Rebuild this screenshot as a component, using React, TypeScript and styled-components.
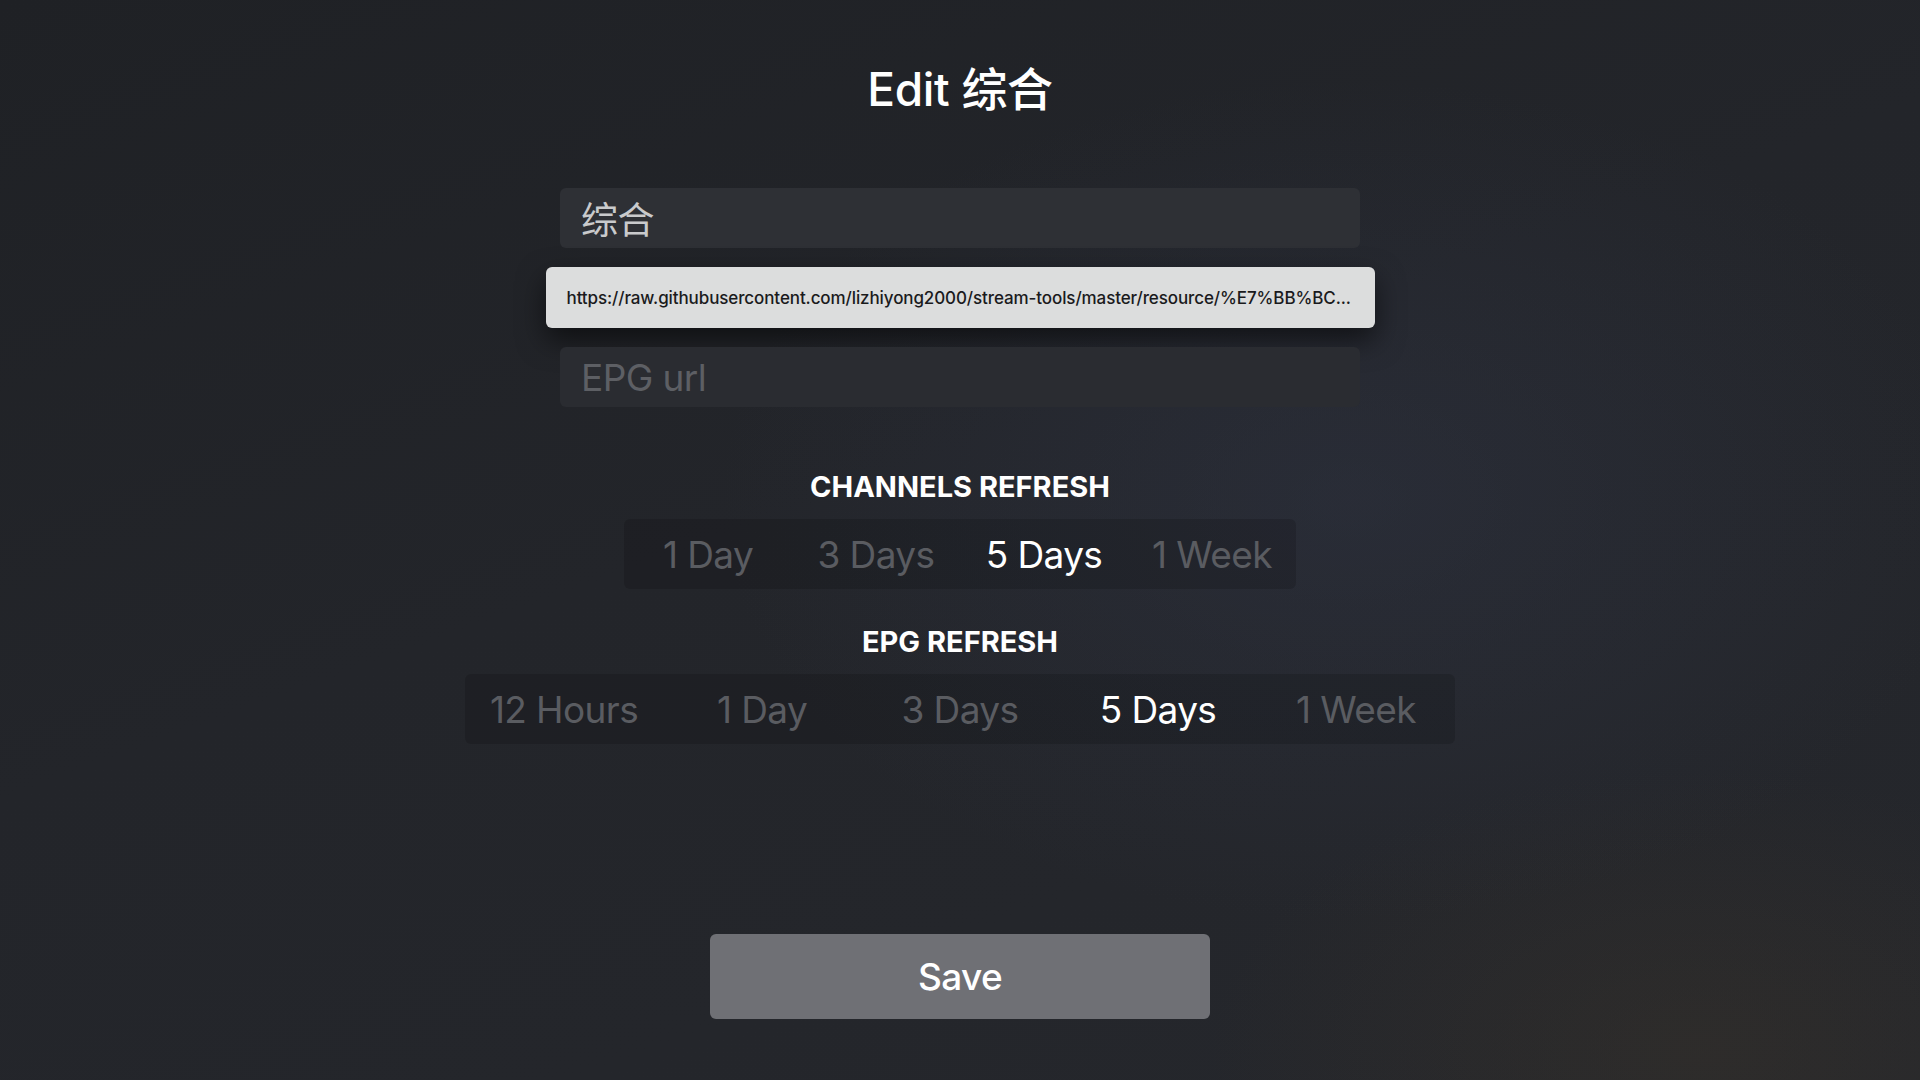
import React from "react";
import styled, { createGlobalStyle } from "styled-components";

const GlobalStyle = createGlobalStyle`
  html, body {
    margin: 0;
    padding: 0;
    width: 100%;
    height: 100%;
  }
  body {
    font-family: "Inter", "Noto Sans CJK SC", sans-serif;
    background: #222428;
    -webkit-font-smoothing: antialiased;
  }
`;

const Screen = styled.div`
  width: 1920px;
  height: 1080px;
  box-sizing: border-box;
  display: flex;
  flex-direction: column;
  align-items: center;
  padding-top: 60px;
  background:
    radial-gradient(ellipse 900px 600px at 1350px 500px, rgba(52, 58, 78, 0.35), rgba(0,0,0,0) 70%),
    radial-gradient(ellipse 700px 400px at 1700px 1050px, rgba(70, 58, 40, 0.28), rgba(0,0,0,0) 70%),
    linear-gradient(160deg, #1f2125 0%, #23252a 45%, #25272c 100%);
  overflow: hidden;
`;

const Title = styled.h1`
  margin: 0;
  font-family: "Inter", "Noto Sans CJK SC", sans-serif;
  font-size: 46px;
  line-height: 58px;
  font-weight: 500;
  color: #ffffff;
  letter-spacing: -0.3px;
`;

const Form = styled.div`
  margin-top: 70px;
  display: flex;
  flex-direction: column;
  align-items: center;
  gap: 19px;
`;

const TextField = styled.div<{ $placeholder?: boolean }>`
  width: 800px;
  height: 60px;
  box-sizing: border-box;
  padding: 0 21px;
  display: flex;
  align-items: center;
  border-radius: 6px;
  background: ${(p) => (p.$placeholder ? "#2a2c31" : "#2e3035")};
  color: ${(p) => (p.$placeholder ? "#5d5f64" : "#c9cacc")};
  font-family: "Inter", "Noto Sans CJK SC", sans-serif;
  font-size: 37px;
  letter-spacing: -0.6px;
`;

const FocusedField = styled.div`
  width: 829px;
  height: 61px;
  box-sizing: border-box;
  padding: 0 21px;
  display: flex;
  align-items: center;
  border-radius: 6px;
  background: #dcdddd;
  color: #1a1a1c;
  font-family: "Inter", sans-serif;
  font-size: 17px;
  font-weight: 500;
  letter-spacing: -0.1px;
  white-space: nowrap;
  overflow: hidden;
  box-shadow: 0 12px 28px rgba(0, 0, 0, 0.55);
`;

const Section = styled.div<{ $top: number }>`
  margin-top: ${(p) => p.$top}px;
  display: flex;
  flex-direction: column;
  align-items: center;
`;

const SectionLabel = styled.div`
  font-family: "Inter", sans-serif;
  font-size: 29px;
  line-height: 34px;
  font-weight: 700;
  color: #ffffff;
  letter-spacing: 0;
`;

const Segmented = styled.div<{ $count: number; $cell: number }>`
  margin-top: 15px;
  display: grid;
  grid-template-columns: repeat(${(p) => p.$count}, ${(p) => p.$cell}px);
  height: 70px;
  border-radius: 6px;
  background: rgba(0, 0, 0, 0.14);
`;

const Segment = styled.div<{ $active?: boolean }>`
  display: flex;
  align-items: center;
  justify-content: center;
  font-family: "Inter", sans-serif;
  font-size: 37px;
  letter-spacing: -0.6px;
  font-weight: 400;
  color: ${(p) => (p.$active ? "#ffffff" : "#5a5c61")};
`;

const SaveButton = styled.button`
  margin-top: 190px;
  width: 500px;
  height: 85px;
  border: none;
  border-radius: 6px;
  background: #6f7075;
  color: #ffffff;
  font-family: "Inter", sans-serif;
  font-size: 37px;
  font-weight: 500;
  letter-spacing: -0.6px;
  cursor: pointer;
`;

const channelOptions = ["1 Day", "3 Days", "5 Days", "1 Week"];
const epgOptions = ["12 Hours", "1 Day", "3 Days", "5 Days", "1 Week"];

export default function App() {
  return (
    <>
      <GlobalStyle />
      <Screen>
        <Title>Edit 综合</Title>
        <Form>
          <TextField>综合</TextField>
          <FocusedField>
            https://raw.githubusercontent.com/lizhiyong2000/stream-tools/master/resource/%E7%BB%BC...
          </FocusedField>
          <TextField $placeholder>EPG url</TextField>
        </Form>
        <Section $top={63}>
          <SectionLabel>CHANNELS REFRESH</SectionLabel>
          <Segmented $count={4} $cell={168}>
            {channelOptions.map((o) => (
              <Segment key={o} $active={o === "5 Days"}>
                {o}
              </Segment>
            ))}
          </Segmented>
        </Section>
        <Section $top={36}>
          <SectionLabel>EPG REFRESH</SectionLabel>
          <Segmented $count={5} $cell={198}>
            {epgOptions.map((o) => (
              <Segment key={o} $active={o === "5 Days"}>
                {o}
              </Segment>
            ))}
          </Segmented>
        </Section>
        <SaveButton>Save</SaveButton>
      </Screen>
    </>
  );
}
